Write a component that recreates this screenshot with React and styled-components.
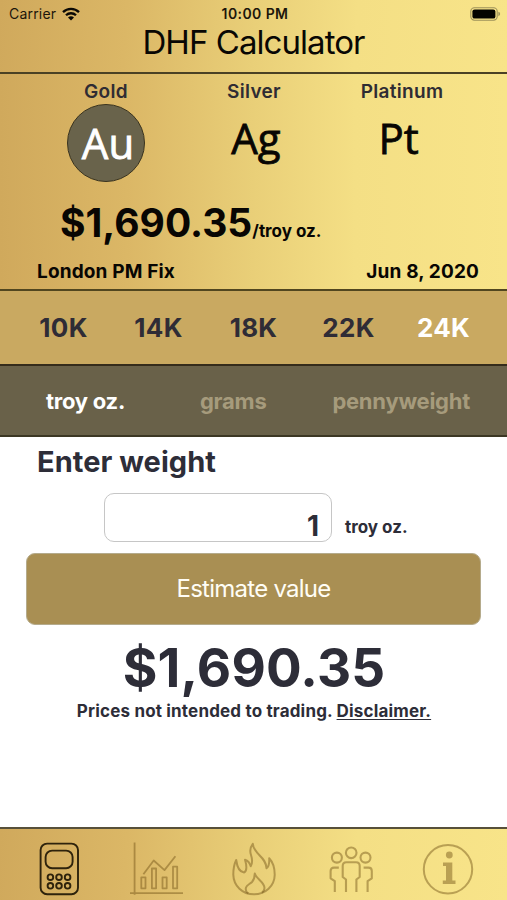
import React, { useState } from 'react'
import styled, { createGlobalStyle } from 'styled-components'

const metals = [
    { name: 'Gold', symbol: 'Au' },
    { name: 'Silver', symbol: 'Ag' },
    { name: 'Platinum', symbol: 'Pt', shift: 11 },
]
const karats = ['10K', '14K', '18K', '22K', '24K']
const units = ['troy oz.', 'grams', 'pennyweight']

function App() {

    const [metal, setMetal] = useState('Gold')
    const [karat, setKarat] = useState('24K')
    const [unit, setUnit] = useState('troy oz.')
    const [weight, setWeight] = useState('1')

    return (
        <Screen>
            <GlobalStyle />
            <Header>
                <StatusBar>
                    <Carrier>Carrier <WifiIcon /></Carrier>
                    <Clock>10:00 PM</Clock>
                    <BatteryIcon />
                </StatusBar>
                <Title>DHF Calculator</Title>
            </Header>

            <Market>
                <Metals>
                    {metals.map((m) => (
                        <Metal key={m.name} onClick={() => setMetal(m.name)}>
                            <MetalName>{m.name}</MetalName>
                            <Symbol $active={m.name === metal} $shift={m.shift}>{m.symbol}</Symbol>
                        </Metal>
                    ))}
                </Metals>
                <Price>
                    <Amount>$1,690.35</Amount>
                    <PerUnit>/troy oz.</PerUnit>
                </Price>
                <FixRow>
                    <span>London PM Fix</span>
                    <span>Jun 8, 2020</span>
                </FixRow>
            </Market>

            <Karats>
                {karats.map((k) => (
                    <Karat key={k} $active={k === karat} onClick={() => setKarat(k)}>{k}</Karat>
                ))}
            </Karats>

            <Units>
                {units.map((u) => (
                    <Unit key={u} $active={u === unit} onClick={() => setUnit(u)}>{u}</Unit>
                ))}
            </Units>

            <Main>
                <Label>Enter weight</Label>
                <WeightRow>
                    <WeightInput value={weight} onChange={(e) => setWeight(e.target.value)} />
                    <WeightUnit>{unit}</WeightUnit>
                </WeightRow>
                <EstimateButton>Estimate value</EstimateButton>
                <Result>$1,690.35</Result>
                <Note>Prices not intended to trading. <a href="#">Disclaimer.</a></Note>
            </Main>

            <TabBar>
                <Tab $active><CalculatorIcon /></Tab>
                <Tab><ChartIcon /></Tab>
                <Tab><FlameIcon /></Tab>
                <Tab><PeopleIcon /></Tab>
                <Tab><InfoIcon /></Tab>
            </TabBar>
        </Screen>
    )
}

export default App

function WifiIcon() {
    return (
        <svg width="18" height="14" viewBox="0 0 18 14">
            <g fill="none" stroke="#0b0905" strokeWidth="2.3">
                <path d="M1 5.1a11.4 11.4 0 0 1 16 0" />
                <path d="M4 8.3a7.1 7.1 0 0 1 10 0" />
            </g>
            <path d="M9 13.6 6 10.6a4.3 4.3 0 0 1 6 0z" fill="#0b0905" />
        </svg>
    )
}

function BatteryIcon() {
    return (
        <svg width="31" height="14" viewBox="0 0 31 14">
            <rect x="0.8" y="0.8" width="26.4" height="12.4" rx="3.6" fill="none" stroke="#9d915a" strokeWidth="1.1" />
            <rect x="2.4" y="2.4" width="23" height="9.2" rx="2.2" fill="#050400" />
            <path d="M28.4 4.8q1.7.6 1.7 2.2t-1.7 2.2z" fill="#9d915a" />
        </svg>
    )
}

function CalculatorIcon() {
    return (
        <svg width="54" height="54" viewBox="0 0 54 54" strokeWidth="1.9">
            <rect x="8.6" y="1.6" width="37.4" height="50.6" rx="6.5" />
            <rect x="13.6" y="8.6" width="27" height="17.6" rx="6.5" />
            {[35.2, 43.8].map((y) => [18.4, 27, 35.6].map((x) => (
                <circle key={`${x}-${y}`} cx={x} cy={y} r="2.8" />
            )))}
        </svg>
    )
}

function ChartIcon() {
    return (
        <svg width="54" height="54" viewBox="0 0 54 54" strokeWidth="1.8">
            <path d="M5.6.5v52.2M1 51.2h53" />
            <path d="m14.4 32.3 10.3-13.8 10.8 9.6L46.4 14.3" />
            <rect x="12.3" y="35.3" width="4.2" height="11" />
            <rect x="22.9" y="26.5" width="4.2" height="19.8" />
            <rect x="33.5" y="35.3" width="4.2" height="11" />
            <rect x="44" y="24.7" width="4.2" height="21.6" />
        </svg>
    )
}

function FlameIcon() {
    return (
        <svg width="54" height="54" viewBox="0 0 54 54" strokeWidth="2">
            <path d="M25.8 1.8C23 5.5 22.8 9.500 24 13c1.500 4.500 1.700 8-.3 11.200-.9-3.200-2.800-5.600-5.700-6.500 1.700 5.300 2.200 12-1 12.800-4.500-.5-7-6.500-7.800-12.500C7.500 21.500 6.300 27 6.300 32.500 6.500 44 15.500 52.300 27 52.300s20.500-8.300 20.700-19.300c.1-7-1.500-12.500-5.500-16.800.3 4.500-.2 8.200-2.700 10.100C39.300 14.500 26.500 12.500 25.800 1.800z" />
            <path d="M35 50.600c1.700-1.200 2.500-2.700 2.500-4.600 0-6-8.800-9.500-9.700-14.500-.1 3.500-.8 6.300-2.800 8.500-2.200 2.300-5 2.500-6 5.500-.7 2.500.2 4.600 2.300 6" />
        </svg>
    )
}

function PeopleIcon() {
    return (
        <svg width="54" height="54" viewBox="0 0 54 54" strokeWidth="2.1">
            <circle cx="27.2" cy="10.8" r="5.3" />
            <circle cx="12.9" cy="15.6" r="5" />
            <circle cx="41.5" cy="15.6" r="5" />
            <path d="M22 50V37.5l-3.300-2.500V24q0-3.700 3.700-3.700h9.600q3.700 0 3.700 3.700v11l-3.300 2.500V50" />
            <path d="M14.800 25.600H10q-3.400 0-3.400 3.400v7.300l4.200 2.900V50M39.600 25.600h4.800q3.400 0 3.400 3.400v7.300l-4.200 2.900V50" />
        </svg>
    )
}

function InfoIcon() {
    return (
        <svg width="54" height="54" viewBox="0 0 54 54">
            <circle cx="27" cy="27.3" r="24.2" strokeWidth="2" />
            <circle cx="28.3" cy="13" r="3.4" fill="currentColor" stroke="none" />
            <path d="M22 20.5h9.3v17.9h3.200v3.600H21.800v-3.600H25V24.100h-3z" fill="currentColor" stroke="none" />
        </svg>
    )
}

const GlobalStyle = createGlobalStyle`
*{
    box-sizing: border-box;
}
body{
    margin: 0;
    background: white;
    font-family: Inter, "Liberation Sans", sans-serif;
    color: #2d2d38;
}
button, input{
    font-family: inherit;
    color: inherit;
    margin: 0;
    padding: 0;
    border: 0;
    background: none;
}
`

const goldStops = '#d0a95c 0%, #dbb766 25%, #e9cf78 50%, #f4df85 70%, #f8e489 100%'

const Screen = styled.div`
display: flex;
flex-direction: column;
height: 900px;
overflow: hidden;
`

const Header = styled.header`
height: 74px;
background: linear-gradient(94deg, ${goldStops});
border-bottom: 2px solid #4a4124;
`

const StatusBar = styled.div`
display: grid;
grid-template-columns: 1fr auto 1fr;
align-items: center;
height: 27px;
padding: 0 6px 0 9px;
color: #1c160b;

> svg{
    justify-self: end;
}
`

const Carrier = styled.span`
display: flex;
align-items: center;
gap: 6px;
font-size: 14px;
letter-spacing: 0.2px;
`

const Clock = styled.span`
font-size: 14px;
font-weight: 600;
letter-spacing: 0.4px;
`

const Title = styled.h1`
margin: 0;
line-height: 30px;
font-size: 33px;
font-weight: 400;
letter-spacing: -0.95px;
text-align: center;
color: #090704;
`

const Market = styled.section`
height: 217px;
background: linear-gradient(90deg, ${goldStops});
border-bottom: 2px solid #51461f;
color: #080603;
`

const Metals = styled.div`
display: grid;
grid-template-columns: repeat(3, 148px);
padding-left: 32px;
`

const Metal = styled.button`
display: flex;
flex-direction: column;
align-items: center;
padding-top: 6px;
`

const MetalName = styled.span`
line-height: 24px;
font-size: 19px;
font-weight: 600;
letter-spacing: 0.3px;
color: #2f2c33;
`

/* the symbols that are not picked sit a bit higher than the one in the circle */
const Symbol = styled.span`
width: 78px;
height: 78px;
border: 1px solid ${props => props.$active ? '#39331f' : 'transparent'};
border-radius: 50%;
background: ${props => props.$active ? '#69634b' : 'none'};
color: ${props => props.$active ? 'white' : '#080603'};
font-family: "Open Sans", sans-serif;
font-size: 42px;
line-height: ${props => props.$active ? 76 : 66}px;
-webkit-text-stroke: 0.8px currentColor;
padding-left: 4px;
padding-right: ${props => props.$shift || 0}px;
text-align: center;
`

const Price = styled.div`
display: flex;
align-items: baseline;
height: 77px;
padding: 16px 0 0 60px;
`

const Amount = styled.span`
font-size: 39px;
line-height: 50px;
font-weight: 700;
`

const PerUnit = styled.span`
font-size: 17px;
font-weight: 700;
`

const FixRow = styled.div`
display: flex;
justify-content: space-between;
padding: 0 28px 0 37px;
line-height: 26px;
font-size: 19px;
font-weight: 700;
letter-spacing: 0.15px;
`

const Karats = styled.div`
display: grid;
grid-template-columns: repeat(5, 95px);
justify-content: center;
align-items: center;
height: 75px;
background: #c9a961;
border-bottom: 2px solid #342c1c;
`

const Karat = styled.button`
font-size: 26px;
font-weight: 700;
letter-spacing: 0.3px;
color: ${props => props.$active ? 'white' : '#2f2c36'};
`

const Units = styled.div`
display: flex;
justify-content: space-between;
align-items: center;
height: 71px;
padding: 0 37px 0 46px;
background: #696149;
border-bottom: 2px solid #3c3724;
`

const Unit = styled.button`
font-size: 22px;
font-weight: 700;
letter-spacing: -0.25px;
color: ${props => props.$active ? 'white' : '#a69b7c'};

&:nth-child(2){
    margin-left: 9px;
}
`

const Main = styled.main`
flex: 1;
display: flex;
flex-direction: column;
`

const Label = styled.h2`
margin: 8px 0 14px 37px;
line-height: 34px;
font-size: 29px;
font-weight: 700;
letter-spacing: 0.05px;
`

const WeightRow = styled.div`
display: flex;
align-items: flex-end;
padding-left: 104px;
`

const WeightInput = styled.input`
width: 228px;
height: 49px;
padding: 16px 12px 0 0;
border: 1px solid #c6c6c6;
border-radius: 10px;
font-size: 28px;
font-weight: 700;
text-align: right;
outline: none;
`

const WeightUnit = styled.span`
margin-left: 13px;
padding-bottom: 5px;
font-size: 17px;
font-weight: 700;
`

const EstimateButton = styled.button`
width: 455px;
height: 72px;
margin: 11px 0 0 26px;
padding-bottom: 1px;
border: 1px solid #b5ab8c;
border-radius: 9px;
background: #a98f53;
color: #fffdf5;
font-size: 24px;
letter-spacing: -0.75px;
`

const Result = styled.div`
margin-top: 11px;
line-height: 64px;
font-size: 53px;
font-weight: 700;
letter-spacing: 0.15px;
padding-left: 1px;
text-align: center;
`

const Note = styled.p`
margin: 0;
padding-left: 1px;
line-height: 22px;
font-size: 17px;
font-weight: 700;
letter-spacing: 0.17px;
text-align: center;

a{
    color: inherit;
    text-underline-offset: 2px;
    text-decoration-thickness: 1px;
}
`

const TabBar = styled.nav`
display: flex;
justify-content: space-between;
align-items: flex-start;
height: 73px;
padding: 13px 32px 0;
background: linear-gradient(94deg, ${goldStops});
border-top: 2px solid #57503a;
`

const Tab = styled.button`
height: 54px;
color: ${props => props.$active ? '#2e230c' : 'rgba(110, 80, 20, 0.45)'};

svg{
    display: block;
    fill: none;
    stroke: currentColor;
    stroke-linejoin: round;
}
`
